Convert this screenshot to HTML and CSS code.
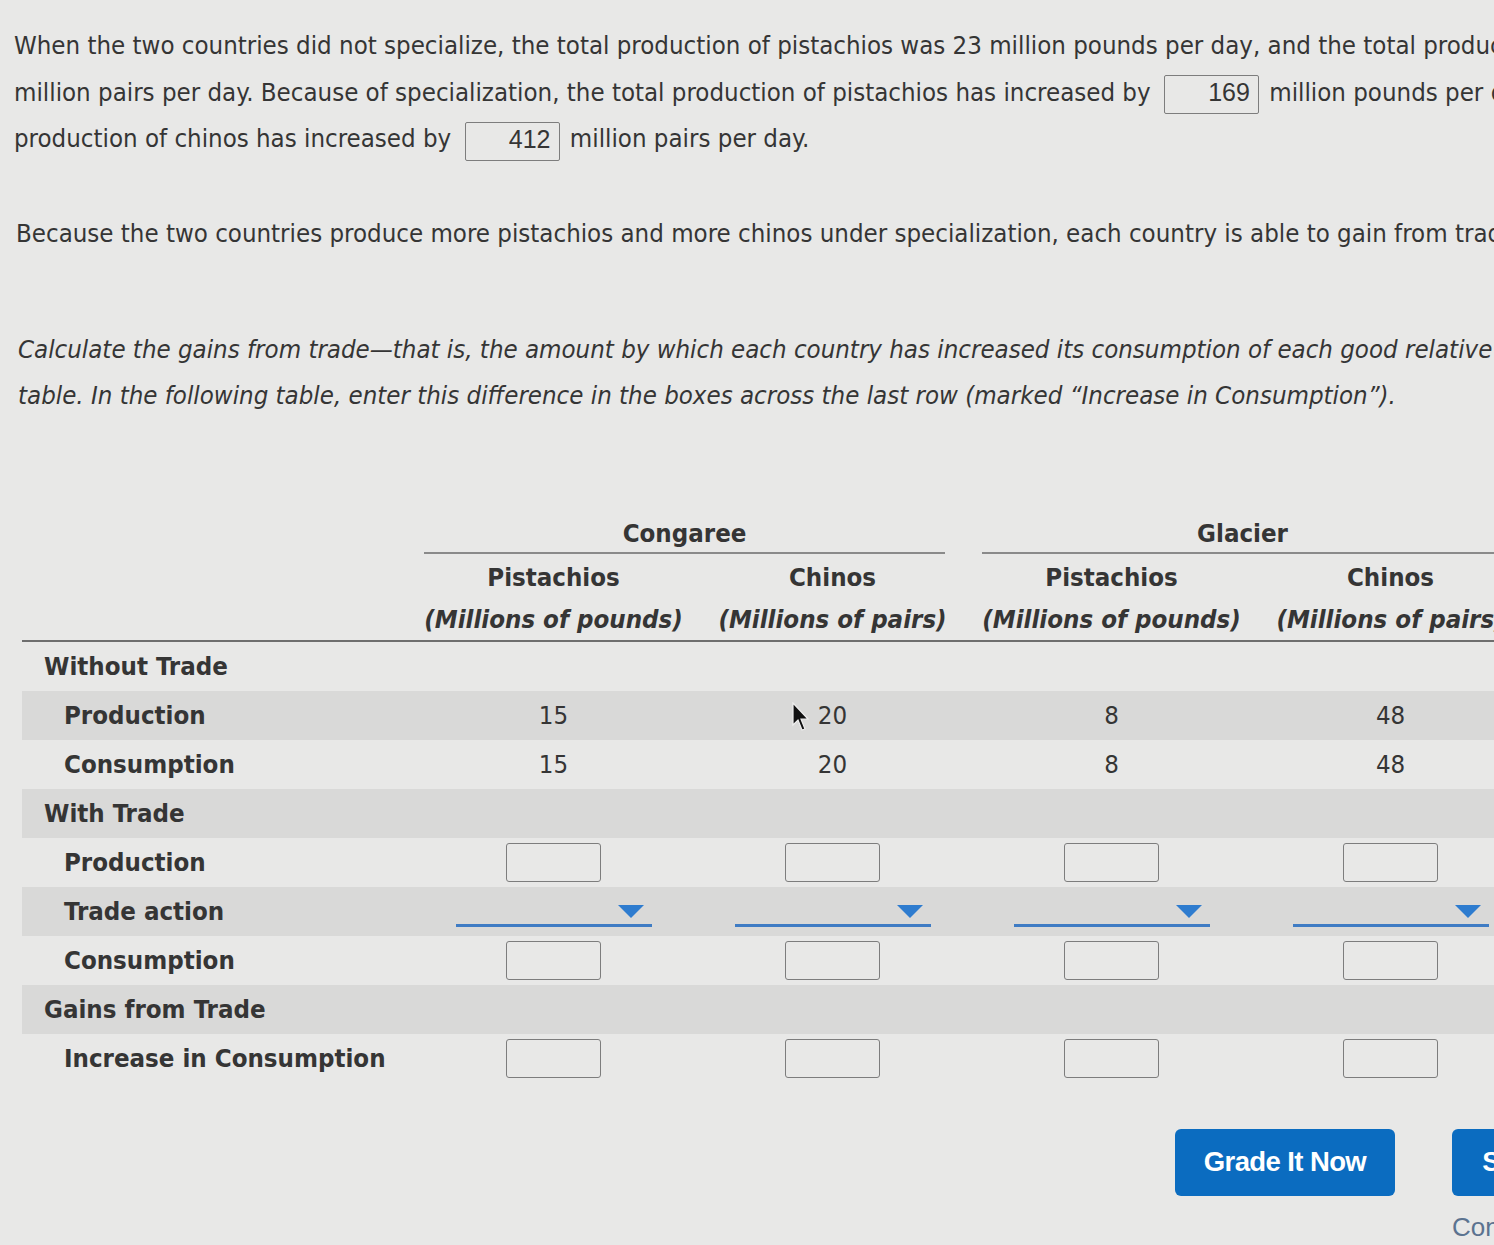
FILE: index.html
```html
<!DOCTYPE html>
<html lang="en">
<head>
<meta charset="utf-8">
<title>Gains from trade</title>
<link rel="stylesheet" href="styles.css">
</head>
<body>
<div class="page">
  <p class="para p1">When the two countries did not specialize, the total production of pistachios was 23 million pounds per day, and the total production of chinos was 68<br>million pairs per day. Because of specialization, the total production of pistachios has increased by <span class="ans">169</span> million pounds per day, and the total<br>production of chinos has increased by <span class="ans">412</span> million pairs per day.</p>
  <p class="para p2">Because the two countries produce more pistachios and more chinos under specialization, each country is able to gain from trade.</p>
  <p class="para p3"><em>Calculate the gains from trade—that is, the amount by which each country has increased its consumption of each good relative to the first row of the<br>table. In the following table, enter this difference in the boxes across the last row (marked “Increase in Consumption”).</em></p>

  <table class="grid">
    <colgroup><col class="c-label"><col class="c-val"><col class="c-val"><col class="c-val"><col class="c-val"></colgroup>
    <thead>
      <tr class="h1"><th></th><th colspan="2"><div class="country">Congaree</div></th><th colspan="2"><div class="country">Glacier</div></th></tr>
      <tr class="h2">
        <th></th>
        <th>Pistachios<br><i>(Millions of pounds)</i></th>
        <th>Chinos<br><i>(Millions of pairs)</i></th>
        <th>Pistachios<br><i>(Millions of pounds)</i></th>
        <th>Chinos<br><i>(Millions of pairs)</i></th>
      </tr>
    </thead>
    <tbody>
      <tr><td class="grp">Without Trade</td><td></td><td></td><td></td><td></td></tr>
      <tr class="band"><td class="sub">Production</td><td>15</td><td>20</td><td>8</td><td>48</td></tr>
      <tr><td class="sub">Consumption</td><td>15</td><td>20</td><td>8</td><td>48</td></tr>
      <tr class="band"><td class="grp">With Trade</td><td></td><td></td><td></td><td></td></tr>
      <tr><td class="sub">Production</td><td><span class="box"></span></td><td><span class="box"></span></td><td><span class="box"></span></td><td><span class="box"></span></td></tr>
      <tr class="band"><td class="sub">Trade action</td><td><span class="dd"></span></td><td><span class="dd"></span></td><td><span class="dd"></span></td><td><span class="dd"></span></td></tr>
      <tr><td class="sub">Consumption</td><td><span class="box"></span></td><td><span class="box"></span></td><td><span class="box"></span></td><td><span class="box"></span></td></tr>
      <tr class="band"><td class="grp">Gains from Trade</td><td></td><td></td><td></td><td></td></tr>
      <tr><td class="sub">Increase in Consumption</td><td><span class="box"></span></td><td><span class="box"></span></td><td><span class="box"></span></td><td><span class="box"></span></td></tr>
    </tbody>
  </table>

  <div class="actions">
    <button class="btn btn-grade">Grade It Now</button>
    <div class="save">
      <button class="btn btn-save">Save &amp; Continue</button>
      <div class="cont">Continue without saving</div>
    </div>
  </div>

  <svg class="cursor" width="18" height="30" viewBox="0 0 18 30"><path d="M1 1 L1 23 L6 18 L10 28 L13 27 L9 17 L16 17 Z" fill="#111" stroke="#eee" stroke-width="1.2"/></svg>
</div>
</body>
</html>
```

FILE: styles.css
```css
html, body {
  margin: 0;
  padding: 0;
  overflow: hidden;
  background: #e8e8e7;
}
body {
  width: 1494px;
  height: 1245px;
}
.page {
  position: relative;
  width: 1760px;
  padding: 22px 0 0 14px;
  box-sizing: border-box;
  font-family: "DejaVu Sans Condensed", "DejaVu Sans", Tahoma, sans-serif;
  color: #353535;
  font-size: 25.6px;
}
.para {
  margin: 0;
  line-height: 46px;
  white-space: nowrap;
}
.p1 { line-height: 46.5px; }
.p2 { margin-top: 48px; padding-left: 2px; }
.p3 { margin-top: 70px; padding-left: 4px; }
.p3 em { font-style: oblique; }
.ans {
  display: inline-block;
  width: 95px;
  height: 39px;
  box-sizing: border-box;
  border: 1.5px solid #7d7d7d;
  border-radius: 2px;
  text-align: right;
  padding-right: 8px;
  font-family: "Liberation Sans", Arial, sans-serif;
  font-size: 25px;
  line-height: 33px;
  vertical-align: middle;
  margin: 2px 3px 0 6px;
}

.grid {
  margin: 98px 0 0 8px;
  border-collapse: collapse;
  table-layout: fixed;
  width: 1508px;
}
.c-label { width: 392px; }
.c-val { width: 279px; }
.grid th {
  padding: 0;
  font-weight: bold;
  text-align: center;
  vertical-align: bottom;
}
.country {
  line-height: 34px;
  padding-bottom: 2px;
  border-bottom: 2px solid #8a8a8a;
  margin: 0 27px 0 10px;
}
.h2 th {
  padding-top: 2px;
  line-height: 42px;
  border-bottom: 2px solid #6e6e6e;
}
.h2 th i { font-style: oblique; }
.grid td {
  height: 49px;
  padding: 0;
  text-align: center;
  vertical-align: middle;
}
.grid td.grp { text-align: left; padding-left: 22px; font-weight: bold; }
.grid td.sub { text-align: left; padding-left: 42px; font-weight: bold; }
.band td { background: #d9d9d8; }
.box {
  display: inline-block;
  width: 95px;
  height: 39px;
  box-sizing: border-box;
  border: 1.5px solid #7d7d7d;
  border-radius: 3px;
  vertical-align: middle;
}
.dd {
  display: inline-block;
  position: relative;
  width: 196px;
  height: 36px;
  box-sizing: border-box;
  border-bottom: 3px solid #3f7cc4;
  vertical-align: middle;
  margin-top: -6px;
}
.dd::after {
  content: "";
  position: absolute;
  right: 8px;
  top: 14px;
  border-left: 13px solid transparent;
  border-right: 13px solid transparent;
  border-top: 13px solid #2e7ccf;
}

.actions {
  display: flex;
  justify-content: flex-end;
  align-items: flex-start;
  gap: 57px;
  margin-top: 46px;
  padding-right: 32px;
}
.btn {
  height: 67px;
  border: none;
  border-radius: 6px;
  background: #0b6cc0;
  color: #fff;
  font-family: "Liberation Sans", Arial, sans-serif;
  font-weight: bold;
  font-size: 27.5px;
  letter-spacing: -0.6px;
  padding: 0;
  text-align: center;
}
.btn-grade { width: 220px; }
.btn-save { width: 270px; }
.cont {
  margin-top: 16px;
  font-family: "Liberation Sans", Arial, sans-serif;
  font-size: 26px;
  color: #5b7390;
}
.cursor {
  position: absolute;
  left: 792px;
  top: 702px;
}
```
